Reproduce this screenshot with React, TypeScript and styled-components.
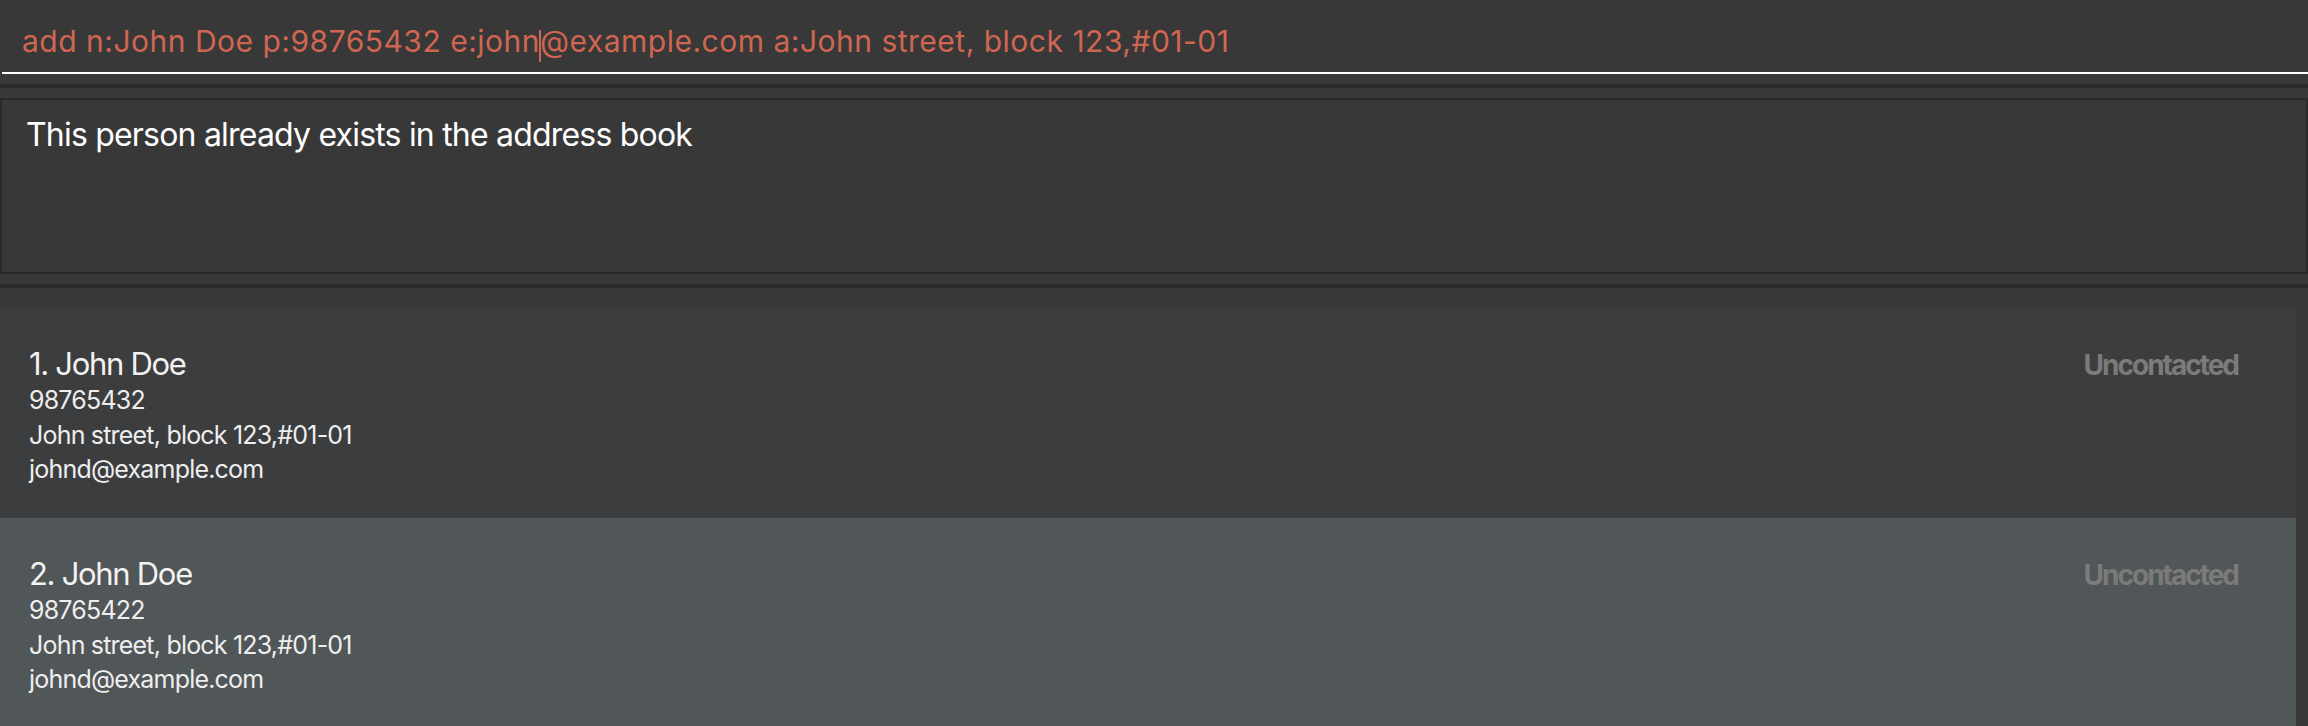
import React from 'react'
import styled, { createGlobalStyle } from 'styled-components'

const GlobalStyle = createGlobalStyle`
  html, body {
    margin: 0;
    padding: 0;
    background-color: #383838;
  }
  body {
    font-family: Inter, 'Noto Sans', 'Liberation Sans', sans-serif;
    -webkit-font-smoothing: antialiased;
  }
`

type Person = {
  name: string
  phone: string
  address: string
  email: string
  status: string
}

const persons: Person[] = [
  { name: 'John Doe', phone: '98765432', address: 'John street, block 123,#01-01', email: 'johnd@example.com', status: 'Uncontacted' },
  { name: 'John Doe', phone: '98765422', address: 'John street, block 123,#01-01', email: 'johnd@example.com', status: 'Uncontacted' },
]

const commandBefore = 'add n:John Doe p:98765432 e:john'
const commandAfter = '@example.com a:John street, block 123,#01-01'

export default function App() {
  return (
    <Page>
      <GlobalStyle />
      <CommandPane>
        <CommandField>
          {commandBefore}
          <Caret />
          {commandAfter}
        </CommandField>
      </CommandPane>

      <Divider $after={10} />

      <ResultBox>
        <ResultText>This person already exists in the address book</ResultText>
      </ResultBox>

      <Divider $after={20} />

      <PersonList>
        {persons.map((p, index) => (
          <PersonCard key={index} $selected={index % 2 === 1}>
            <Details>
              <Name>{`${index + 1}. ${p.name}`}</Name>
              <SmallLabel>{p.phone}</SmallLabel>
              <SmallLabel>{p.address}</SmallLabel>
              <SmallLabel>{p.email}</SmallLabel>
            </Details>
            <Status>{p.status}</Status>
          </PersonCard>
        ))}
      </PersonList>
    </Page>
  )
}

const Page = styled.div`
  width: 100%;
  min-height: 726px;
  background-color: #383838;
  overflow: hidden;
`

const CommandPane = styled.div`
  padding-left: 2px;
`

const CommandField = styled.div`
  height: 74px;
  box-sizing: border-box;
  padding: 24px 0 0 20px;
  border-bottom: 2px solid #ffffff;
  font-size: 30px;
  line-height: 34px;
  letter-spacing: 0.5px;
  color: #d06651;
  white-space: pre;
`

const Caret = styled.span`
  display: inline-block;
  width: 2px;
  height: 32px;
  margin: 0 -1px;
  background-color: #d06651;
  vertical-align: -10px;
`

const Divider = styled.div<{ $after: number }>`
  height: 4px;
  margin: 10px 0 ${p => p.$after}px;
  background-color: #292929;
`

const ResultBox = styled.div`
  height: 176px;
  box-sizing: border-box;
  border: 2px solid #2a2a2a;
  padding: 15px 24px 0;
`

const ResultText = styled.div`
  font-size: 32px;
  line-height: 40px;
  letter-spacing: -0.8px;
  color: #ffffff;
`

const PersonList = styled.div`
  display: flex;
  flex-direction: column;
  padding-right: 12px;
`

const PersonCard = styled.div<{ $selected: boolean }>`
  height: 210px;
  box-sizing: border-box;
  display: flex;
  justify-content: space-between;
  align-items: flex-start;
  padding: 39px 58px 0 29px;
  background-color: ${p => (p.$selected ? '#515658' : '#3c3d3f')};
`

const Details = styled.div`
  display: flex;
  flex-direction: column;
`

const Name = styled.div`
  font-size: 31px;
  line-height: 34px;
  letter-spacing: -1.3px;
  color: #f2f2f2;
  margin-bottom: 2px;
`

const SmallLabel = styled.div`
  font-size: 25px;
  line-height: 34.5px;
  letter-spacing: -0.8px;
  color: #eeeeee;
`

const Status = styled.div`
  margin-top: 1px;
  font-size: 28px;
  line-height: 34px;
  font-weight: 700;
  letter-spacing: -2px;
  color: #7b7b7b;
`
